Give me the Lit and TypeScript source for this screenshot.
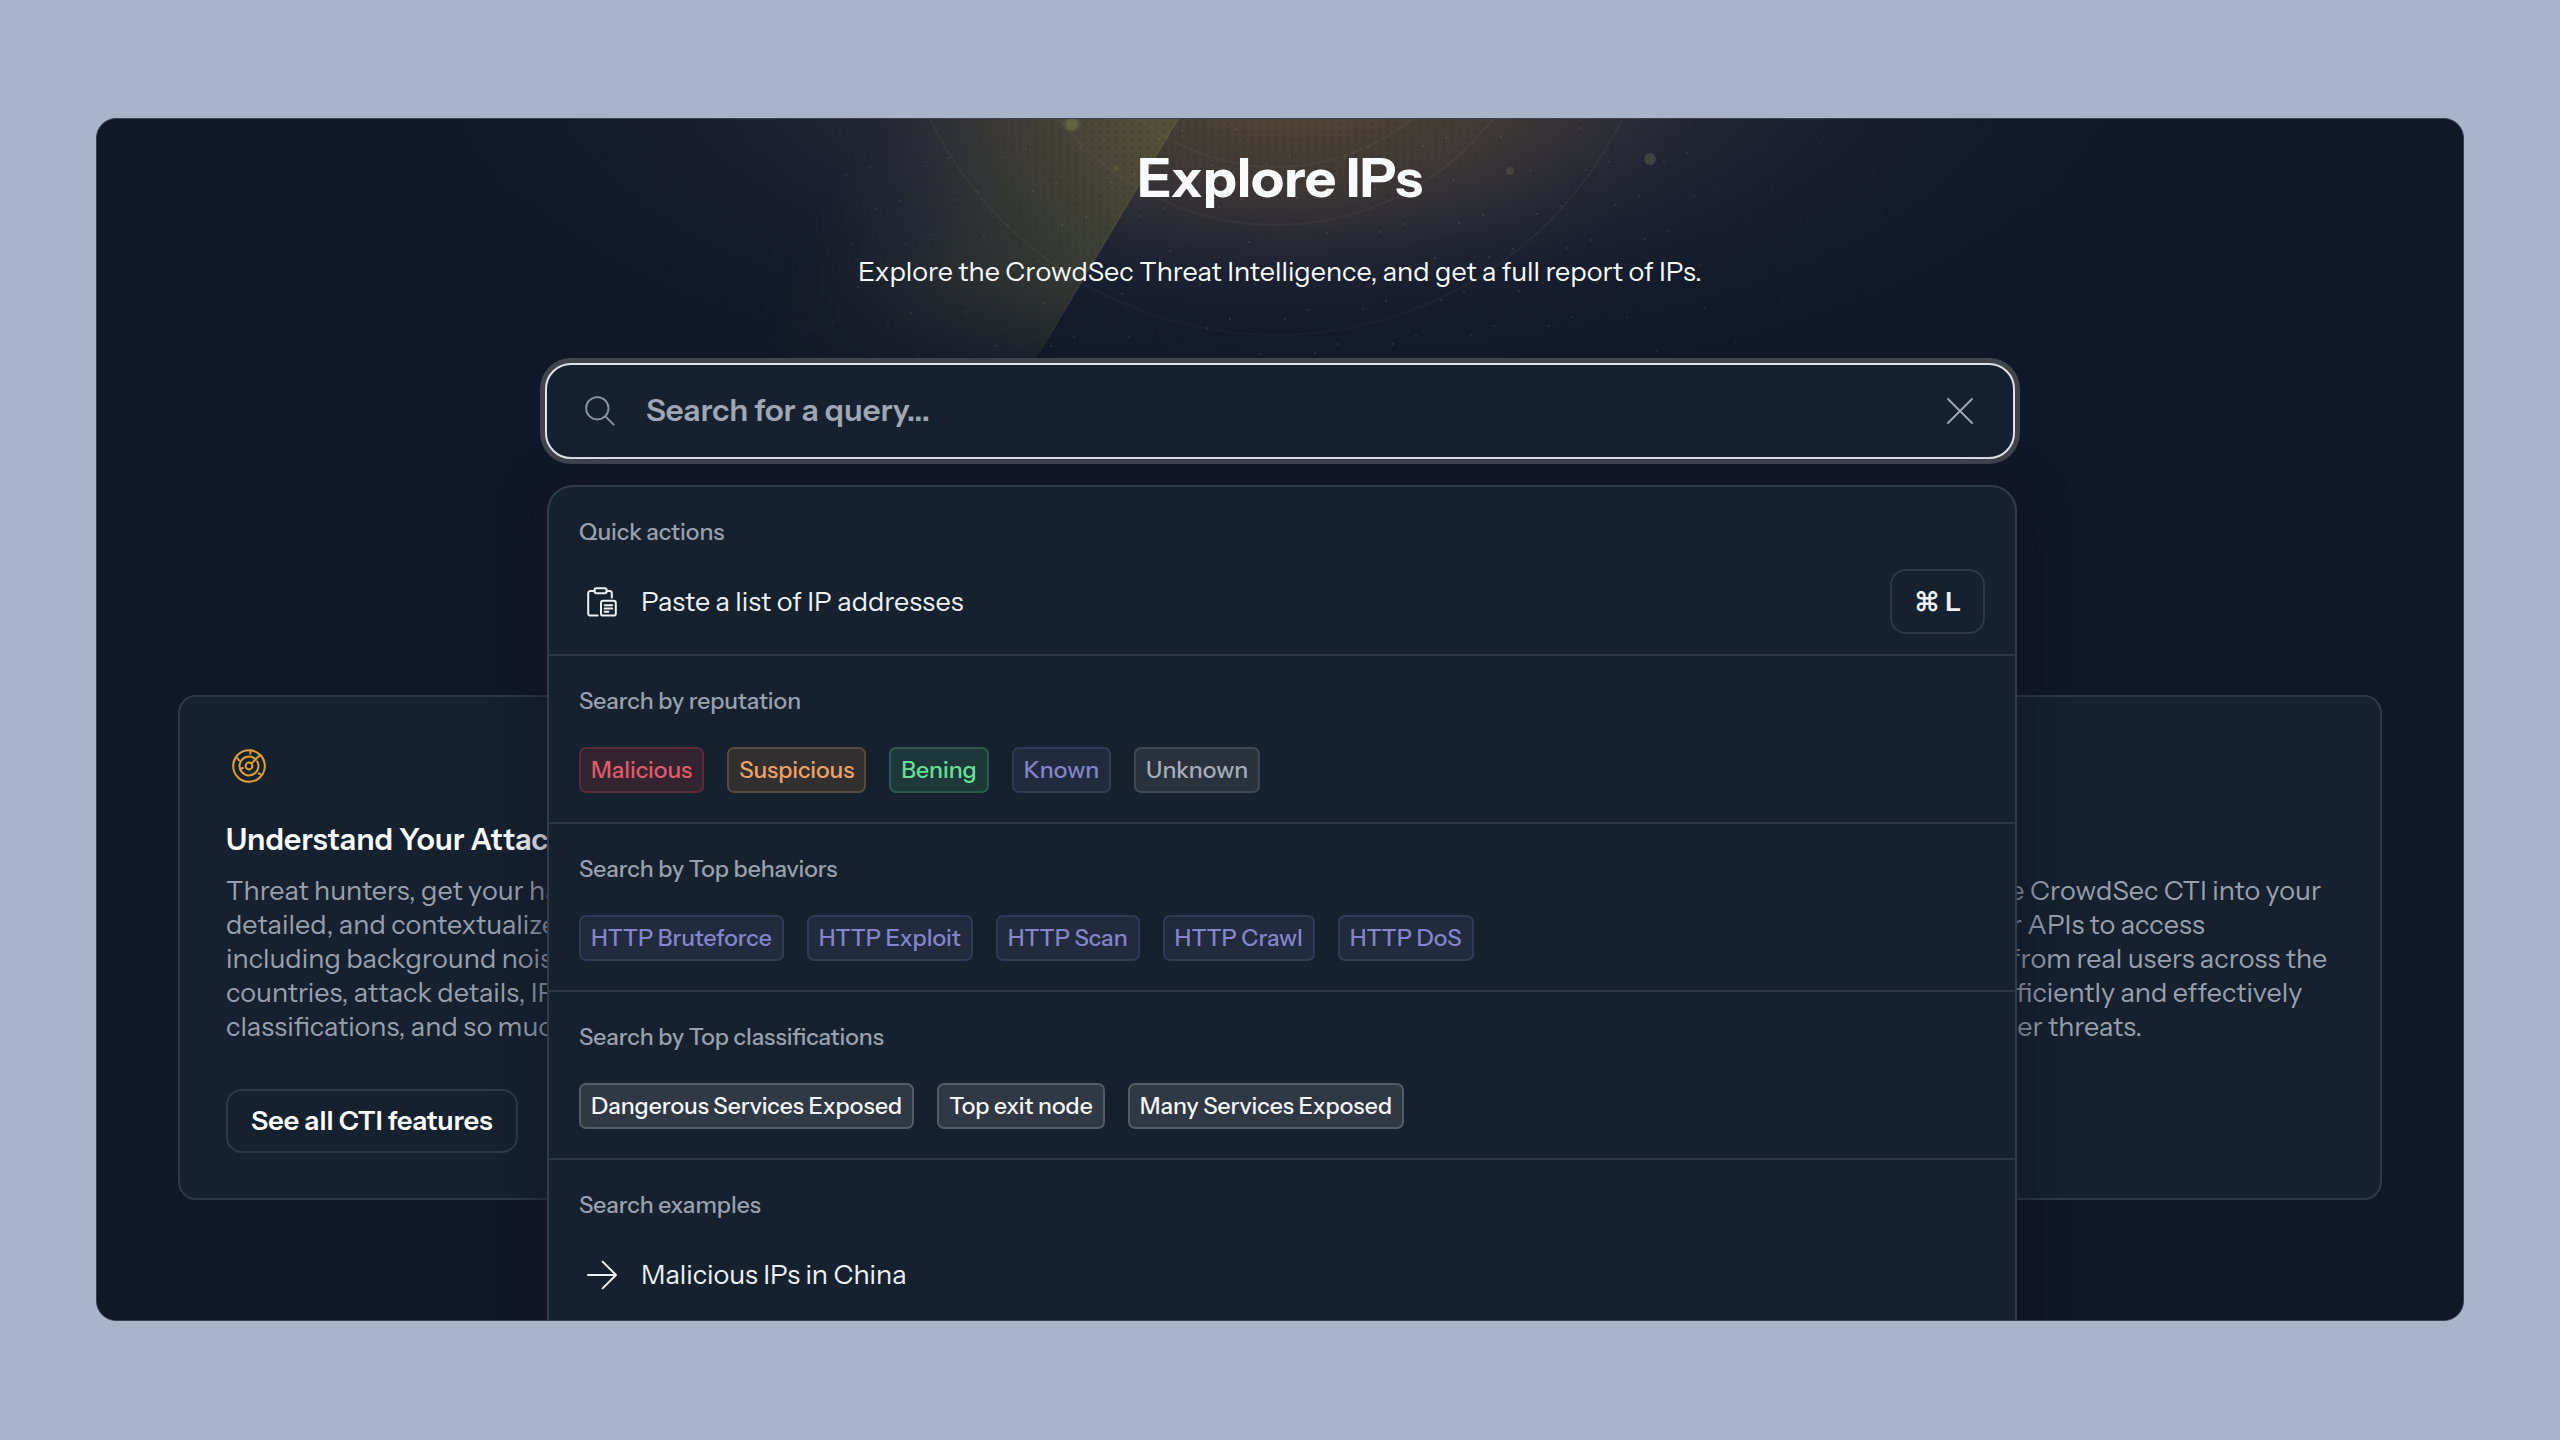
import { LitElement, html, svg, css } from "lit";
import { customElement } from "lit/decorators.js";

interface Chip {
  label: string;
  tone: string;
}

interface ChipGroup {
  title: string;
  chips: Chip[];
}

const GROUPS: ChipGroup[] = [
  {
    title: "Search by reputation",
    chips: [
      { label: "Malicious", tone: "red" },
      { label: "Suspicious", tone: "orange" },
      { label: "Bening", tone: "green" },
      { label: "Known", tone: "indigo" },
      { label: "Unknown", tone: "gray" },
    ],
  },
  {
    title: "Search by Top behaviors",
    chips: ["HTTP Bruteforce", "HTTP Exploit", "HTTP Scan", "HTTP Crawl", "HTTP DoS"].map(
      (label) => ({ label, tone: "indigo" })
    ),
  },
  {
    title: "Search by Top classifications",
    chips: ["Dangerous Services Exposed", "Top exit node", "Many Services Exposed"].map(
      (label) => ({ label, tone: "light" })
    ),
  },
];

const searchIcon = html`<svg class="icon" viewBox="0 0 30 30" width="30" height="30" aria-hidden="true">
  <circle cx="12.3" cy="12.3" r="11.2" /><path d="M20.4 20.4 28.6 28.6" />
</svg>`;

const closeIcon = html`<svg class="icon" viewBox="0 0 26 26" width="26" height="26" aria-hidden="true">
  <path d="M1 1 25 25M25 1 1 25" />
</svg>`;

const pasteIcon = html`<svg class="icon" viewBox="0 0 30 30" width="30" height="30" aria-hidden="true">
  <rect x="7.6" y="1.2" width="12" height="5" rx="1.6" />
  <path d="M7.6 4H3.4A2.2 2.2 0 0 0 1.2 6.2V26.4A2.2 2.2 0 0 0 3.4 28.6H10.6M19.6 4H22.6A2.2 2.2 0 0 1 24.8 6.2V10.4" />
  <rect x="14" y="13.8" width="14.8" height="14.8" rx="2.2" />
  <path d="M17.6 18.2H25.2M17.6 21.4H25.2M17.6 24.8H21.4" />
</svg>`;

const arrowIcon = html`<svg class="icon" viewBox="0 0 30 30" width="30" height="30" aria-hidden="true">
  <path d="M1 15H29M15.6 1.6 29 15 15.6 28.4" />
</svg>`;

const radarIcon = html`<svg class="icon radar" viewBox="0 0 46 46" width="46" height="46" aria-hidden="true">
  <circle cx="23" cy="23" r="15.8" />
  <path d="M28.8 15.6A9.4 9.4 0 1 0 31.2 18.4" />
  <circle cx="23" cy="23" r="3.4" />
  <path d="M25.4 20.6 34 12" />
  <path d="M24.4 7.6V10.8M11.2 15.2 13 17.4M14.2 26 17 25M32.8 30.4 35.4 32" />
</svg>`;

/* Faint specks scattered over the hero, in a fixed pseudo-random order. */
const specks = Array.from({ length: 190 }, (_, i) => {
  const a = (i * 0.61803) % 1;
  const b = (i * 0.75487 + 0.3) % 1;
  return svg`<rect x=${Math.round(580 + a * 1400)} y=${Math.round(124 + b * 232)} width="2" height="2"></rect>`;
});

@customElement("app-root")
export class AppRoot extends LitElement {
  static styles = css`
    :host {
      display: flex;
      box-sizing: border-box;
      min-height: 100vh;
      padding: 118px 96px 119px;
      background: #a7b4c9;
      color: #f8fafc;
      font-family: "Instrument Sans", Inter, "Liberation Sans", sans-serif;
      font-size: 27px;
      line-height: 34px;
    }
    * {
      box-sizing: border-box;
    }
    h1,
    h2,
    h3,
    p {
      margin: 0;
    }
    button,
    input {
      font: inherit;
      color: inherit;
      margin: 0;
    }
    button {
      cursor: pointer;
      white-space: nowrap;
    }
    .icon {
      display: block;
      flex: none;
      fill: none;
      stroke: currentColor;
      stroke-width: 2;
      stroke-linecap: round;
      stroke-linejoin: round;
    }
    .panel {
      position: relative;
      flex: 1;
      min-width: 0;
      overflow: hidden;
      border: 1px solid #3a4353;
      border-radius: 20px;
      background: #101727;
    }
    .glow {
      position: absolute;
      top: 0;
      left: 50%;
      width: 1800px;
      height: 250px;
      transform: translateX(-50%);
    }
    .page {
      position: relative;
      display: flex;
      flex-direction: column;
      align-items: center;
      padding: 27px 81px;
    }
    h1 {
      font-size: 54px;
      line-height: 64px;
      font-weight: 700;
    }
    .lead {
      margin-top: 45px;
      text-align: center;
    }
    .search {
      position: relative;
      z-index: 1;
      width: 100%;
      max-width: 1470px;
      margin-top: 74px;
    }
    .box {
      display: flex;
      align-items: center;
      height: 96px;
      padding: 0 40px 0 38px;
      border: 2px solid #dfe3e9;
      border-radius: 26px;
      background: #15212e;
      box-shadow: 0 0 0 5px #40444c;
      color: #8f97a6;
    }
    .box .icon {
      stroke-width: 1.8;
    }
    .box input {
      flex: 1;
      min-width: 0;
      height: 60px;
      padding: 0 31px 2px;
      border: 0;
      outline: 0;
      background: none;
      font-size: 31px;
      font-weight: 600;
    }
    .box input::placeholder {
      color: #9fa6b4;
      opacity: 1;
    }
    .clear {
      display: flex;
      padding: 0;
      border: 0;
      background: none;
      color: #a3aab7;
    }
    .menu {
      position: absolute;
      top: 122px;
      left: 2px;
      right: -2px;
      min-height: 900px;
      border: 2px solid #313c48;
      border-radius: 26px;
      background: #15212e;
      box-shadow: 0 8px 48px rgba(16, 18, 42, 0.7);
    }
    .group {
      padding: 31px 30px 29px;
      border-bottom: 2px solid #2c3743;
    }
    .group.rows {
      padding-bottom: 20px;
    }
    .group:last-child {
      border-bottom: 0;
    }
    h3 {
      color: #99a1ae;
      font-size: 23px;
      line-height: 28px;
      font-weight: 500;
    }
    .row {
      display: flex;
      align-items: center;
      gap: 24px;
      width: 100%;
      height: 65px;
      margin-top: 23px;
      padding: 0 0 0 8px;
      border: 0;
      background: none;
      text-align: left;
      color: #eef1f5;
    }
    .row kbd {
      display: flex;
      align-items: center;
      justify-content: center;
      gap: 5px;
      width: 95px;
      height: 65px;
      margin-left: auto;
      border: 2px solid #2d3843;
      border-radius: 16px;
      font-family: inherit;
      font-weight: 600;
    }
    .chips {
      display: flex;
      flex-wrap: wrap;
      gap: 23px;
      margin-top: 32px;
    }
    .chip {
      height: 46px;
      padding: 0 10px;
      border: 2px solid;
      border-radius: 7px;
      font-size: 23px;
      line-height: 28px;
      font-weight: 500;
    }
    .red {
      color: #e25a6b;
      background: #32252f;
      border-color: #5a2b3a;
    }
    .orange {
      color: #eea263;
      background: #322f31;
      border-color: #574a3e;
    }
    .green {
      color: #67e09b;
      background: #1e3839;
      border-color: #2e5a4e;
    }
    .indigo {
      color: #8386cb;
      background: #212b3e;
      border-color: #303c53;
    }
    .gray {
      color: #a7adb8;
      background: #28313c;
      border-color: #3f4853;
    }
    .light {
      color: #f5f6f8;
      background: #303843;
      border-color: #535d67;
    }
    .cards {
      display: grid;
      grid-template-columns: repeat(2, minmax(0, 743px));
      justify-content: space-between;
      width: 100%;
      margin-top: 236px;
    }
    .card {
      display: flex;
      flex-direction: column;
      align-items: flex-start;
      min-width: 0;
      padding: 46px 46px 45px;
      border: 2px solid #2d3943;
      border-radius: 18px;
      background: #15212e;
      white-space: nowrap;
    }
    .radar {
      color: #e0a030;
    }
    h2 {
      margin-top: 33px;
      font-size: 30px;
      line-height: 36px;
      font-weight: 600;
    }
    .card p {
      margin-top: 16px;
      color: #98a0ad;
    }
    .more {
      height: 64px;
      margin-top: 45px;
      padding: 0 23px;
      border: 2px solid #2f3a45;
      border-radius: 16px;
      background: none;
      font-weight: 600;
      color: #fff;
    }
  `;

  private renderGlow() {
    return html`<svg class="glow" viewBox="380 119 1800 250" aria-hidden="true">
      <defs>
        <radialGradient id="wide" gradientUnits="userSpaceOnUse" cx="1280" cy="0" r="900" gradientTransform="translate(0 60) scale(1 .4)">
          <stop offset="0" stop-color="#3c3a3c" />
          <stop offset=".35" stop-color="#302f38" stop-opacity=".9" />
          <stop offset=".62" stop-color="#1e2434" stop-opacity=".7" />
          <stop offset="1" stop-color="#101727" stop-opacity="0" />
        </radialGradient>
        <radialGradient id="warm" gradientUnits="userSpaceOnUse" cx="1300" cy="0" r="420" gradientTransform="translate(0 85) scale(1 .5)">
          <stop offset="0" stop-color="#5f5032" stop-opacity=".8" />
          <stop offset=".5" stop-color="#4e4436" stop-opacity=".5" />
          <stop offset="1" stop-color="#333036" stop-opacity="0" />
        </radialGradient>
        <linearGradient id="beam" gradientUnits="userSpaceOnUse" x1="1110" y1="235" x2="880" y2="100">
          <stop offset="0" stop-color="#68673a" stop-opacity=".46" />
          <stop offset=".45" stop-color="#5c5c38" stop-opacity=".3" />
          <stop offset="1" stop-color="#444838" stop-opacity="0" />
        </linearGradient>
        <linearGradient id="fade" x1="0" y1="0" x2="0" y2="1">
          <stop offset="0" stop-color="#fff" />
          <stop offset=".6" stop-color="#ddd" />
          <stop offset="1" stop-color="#333" />
        </linearGradient>
        <mask id="down" maskUnits="userSpaceOnUse" x="380" y="119" width="1800" height="250">
          <rect x="380" y="119" width="1800" height="250" fill="url(#fade)" />
        </mask>
        <radialGradient id="side" gradientUnits="userSpaceOnUse" cx="1280" cy="160" r="760">
          <stop offset=".3" stop-color="#fff" />
          <stop offset="1" stop-color="#000" />
        </radialGradient>
        <mask id="around" maskUnits="userSpaceOnUse" x="380" y="119" width="1800" height="250">
          <rect x="380" y="119" width="1800" height="250" fill="url(#side)" />
        </mask>
        <pattern id="grid" width="8" height="8" patternUnits="userSpaceOnUse">
          <rect x="3" y="3" width="2" height="2" fill="#0b1220" fill-opacity=".16" />
        </pattern>
      </defs>
      <rect x="380" y="119" width="1800" height="250" fill="url(#wide)" />
      <g mask="url(#down)">
        <rect x="380" y="119" width="1800" height="250" fill="url(#warm)" />
        <path d="M1178 119 1030 369H760V119Z" fill="url(#beam)" />
        <path d="M1178 119 1040 352" stroke="#8a8650" stroke-opacity=".22" stroke-width="1.5" />
        <g fill="none" stroke="#8a7f66" stroke-opacity=".1" stroke-width="2">
          <circle cx="1276" cy="-50" r="217" />
          <circle cx="1276" cy="-50" r="275" />
          <circle cx="1276" cy="-50" r="385" />
        </g>
      </g>
      <g mask="url(#around)">
        <rect x="380" y="119" width="1800" height="250" fill="url(#grid)" />
        <g fill="#a9a893" fill-opacity=".14">${specks}</g>
      </g>
      <circle cx="1072" cy="124" r="9" fill="#5d6140" fill-opacity=".4" />
      <circle cx="1072" cy="124" r="6" fill="#686b46" fill-opacity=".7" />
      <circle cx="1650" cy="159" r="6" fill="#3f4240" />
      <circle cx="1510" cy="171" r="4" fill="#46433c" />
      <circle cx="1116" cy="168" r="3" fill="#5c5e3c" fill-opacity=".6" />
    </svg>`;
  }

  private renderGroup(group: ChipGroup) {
    return html`<section class="group">
      <h3>${group.title}</h3>
      <div class="chips">
        ${group.chips.map((c) => html`<button type="button" class="chip ${c.tone}">${c.label}</button>`)}
      </div>
    </section>`;
  }

  render() {
    return html`
      <main class="panel">
        ${this.renderGlow()}
        <div class="page">
          <h1>Explore IPs</h1>
          <p class="lead">Explore the CrowdSec Threat Intelligence, and get a full report of IPs.</p>

          <div class="search">
            <div class="box">
              ${searchIcon}
              <input type="text" aria-label="Search for a query" placeholder="Search for a query..." />
              <button type="button" class="clear" aria-label="Clear search">${closeIcon}</button>
            </div>
            <div class="menu">
              <section class="group rows">
                <h3>Quick actions</h3>
                <button type="button" class="row">
                  ${pasteIcon}<span>Paste a list of IP addresses</span>
                  <kbd><span>⌘</span><span>L</span></kbd>
                </button>
              </section>
              ${GROUPS.map((g) => this.renderGroup(g))}
              <section class="group rows">
                <h3>Search examples</h3>
                <button type="button" class="row">${arrowIcon}<span>Malicious IPs in China</span></button>
              </section>
            </div>
          </div>

          <div class="cards">
            <article class="card">
              ${radarIcon}
              <h2>Understand Your Attackers</h2>
              <p>
                Threat hunters, get your hands on<br />
                detailed, and contextualized data<br />
                including background noise,<br />
                countries, attack details, IP<br />
                classifications, and so much more.
              </p>
              <button type="button" class="more">See all CTI features</button>
            </article>
            <article class="card">
              ${radarIcon}
              <h2>Integrate Our API</h2>
              <p>
                You can easily integrate the CrowdSec CTI into your<br />
                own security stack with our APIs to access<br />
                crowdsourced threat data from real users across the<br />
                world and respond more efficiently and effectively<br />
                to the most aggressive cyber threats.
              </p>
              <button type="button" class="more">See API docs</button>
            </article>
          </div>
        </div>
      </main>
    `;
  }
}
